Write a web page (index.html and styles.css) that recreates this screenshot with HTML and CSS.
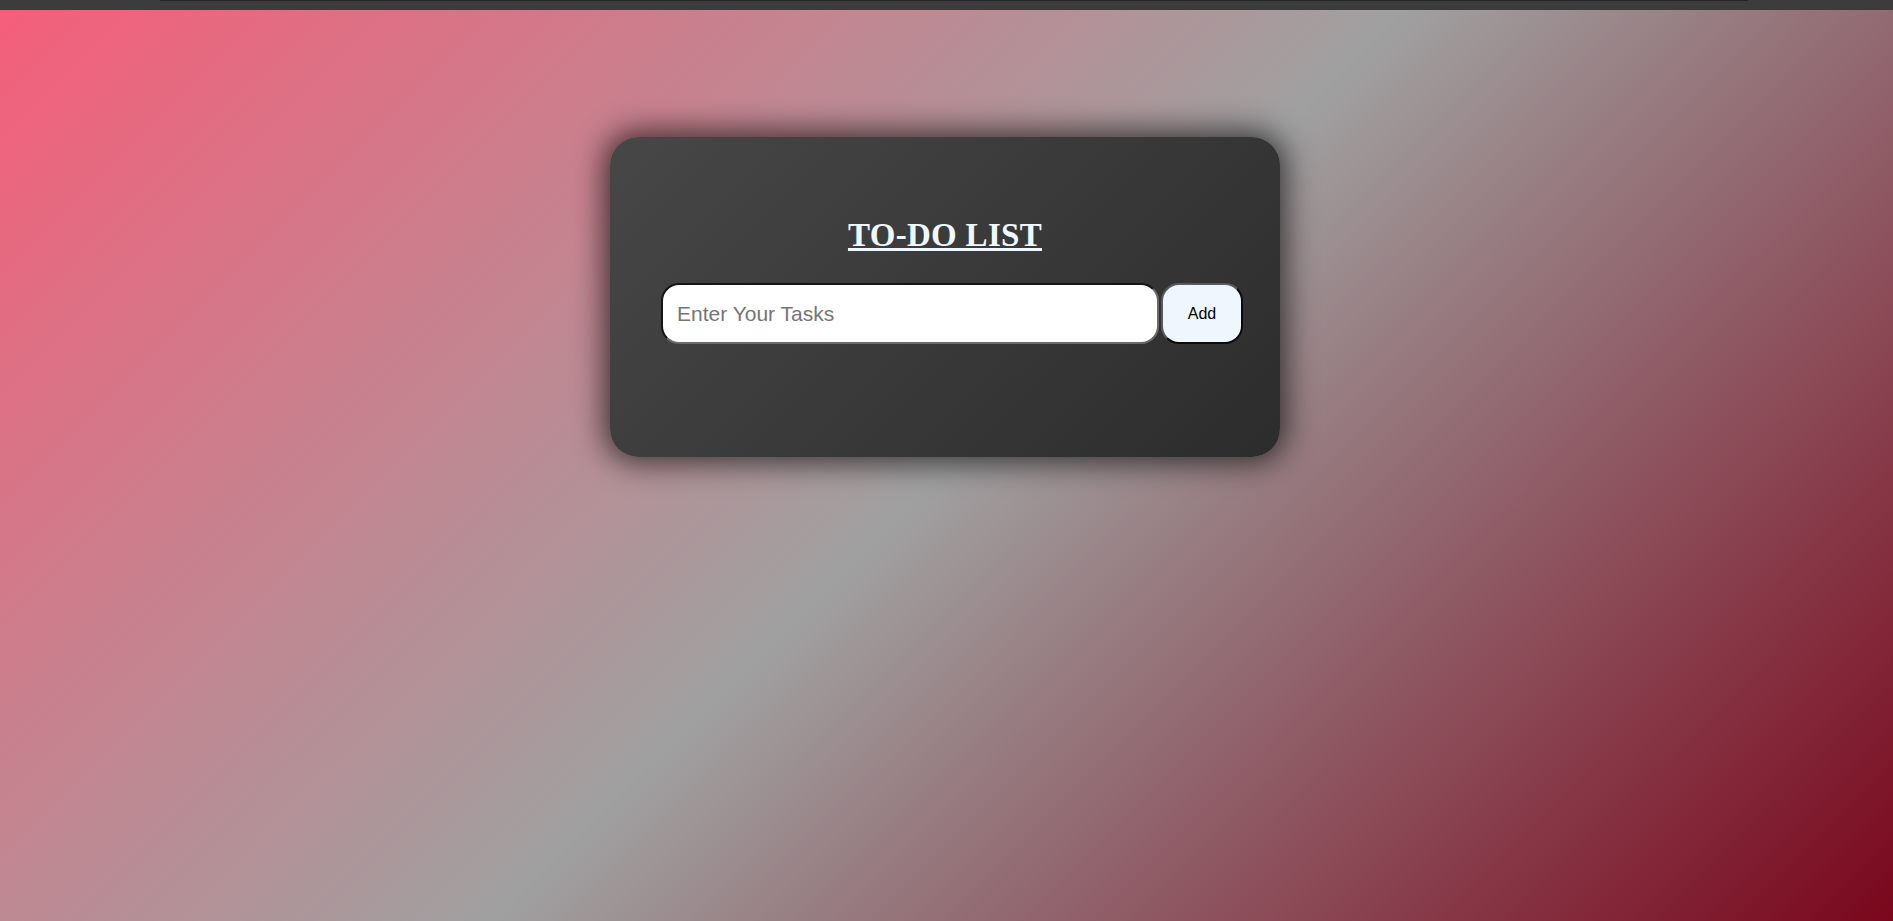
FILE: index.html
```html
<!DOCTYPE html>
<html lang="en">
<head>
<meta charset="utf-8">
<title>To-Do List</title>
<link rel="stylesheet" href="styles.css">
</head>
<body>
<div class="topbar"><div class="topbar-line"></div></div>
<main class="page">
  <section class="card">
    <h1 class="title">TO-DO LIST</h1>
    <form class="task-form">
      <input class="task-input" type="text" placeholder="Enter Your Tasks">
      <button class="add-btn" type="button">Add</button>
    </form>
  </section>
</main>
</body>
</html>
```

FILE: styles.css
```css
* { box-sizing: border-box; }
html, body { margin: 0; padding: 0; height: 100%; }
body {
  display: flex;
  flex-direction: column;
  font-family: "Liberation Sans", Arial, sans-serif;
}
.topbar {
  height: 10px;
  background: #3c3c3c;
  padding: 0 145px 0 160px;
  flex: none;
}
.topbar-line {
  height: 1px;
  background: #262626;
}
.page {
  flex: 1;
  background: linear-gradient(135deg, rgb(245, 94, 122) 0%, #a0a0a0 50%, rgb(122, 6, 28) 100%);
  display: flex;
  flex-direction: column;
  align-items: center;
  padding-top: 127px;
  padding-right: 3px;
}
.card {
  width: 670px;
  padding: 80px 37px 113px 51px;
  border-radius: 28px;
  background: linear-gradient(135deg, #474747 0%, #2d2c2d 100%);
  box-shadow: 0 0 30px 6px rgba(0, 0, 0, 0.65);
}
.title {
  margin: 0 0 29px -14px;
  font-family: "Liberation Serif", "Times New Roman", serif;
  font-size: 33px;
  font-weight: bold;
  letter-spacing: 0.3px;
  color: #f0f8ff;
  text-decoration: underline;
  text-align: center;
}
.task-form {
  display: flex;
  gap: 2px;
  margin: 0;
}
.task-input {
  width: 498px;
  height: 61px;
  padding: 0 14px;
  font-family: "Liberation Sans", Arial, sans-serif;
  font-size: 21px;
  color: #222;
  background: #ffffff;
  border: 2px solid;
  border-color: #151515 #6a6a6a #6a6a6a #151515;
  border-radius: 18px;
  outline: none;
}
.task-input::placeholder { color: #757575; }
.add-btn {
  width: 82px;
  height: 61px;
  padding: 0;
  font-family: "Liberation Sans", Arial, sans-serif;
  font-size: 16px;
  color: #000;
  background: #eff6fe;
  border: 2px solid;
  border-color: #5a5a5a #0a0a0a #0a0a0a #5a5a5a;
  border-radius: 18px;
  cursor: pointer;
}
```
